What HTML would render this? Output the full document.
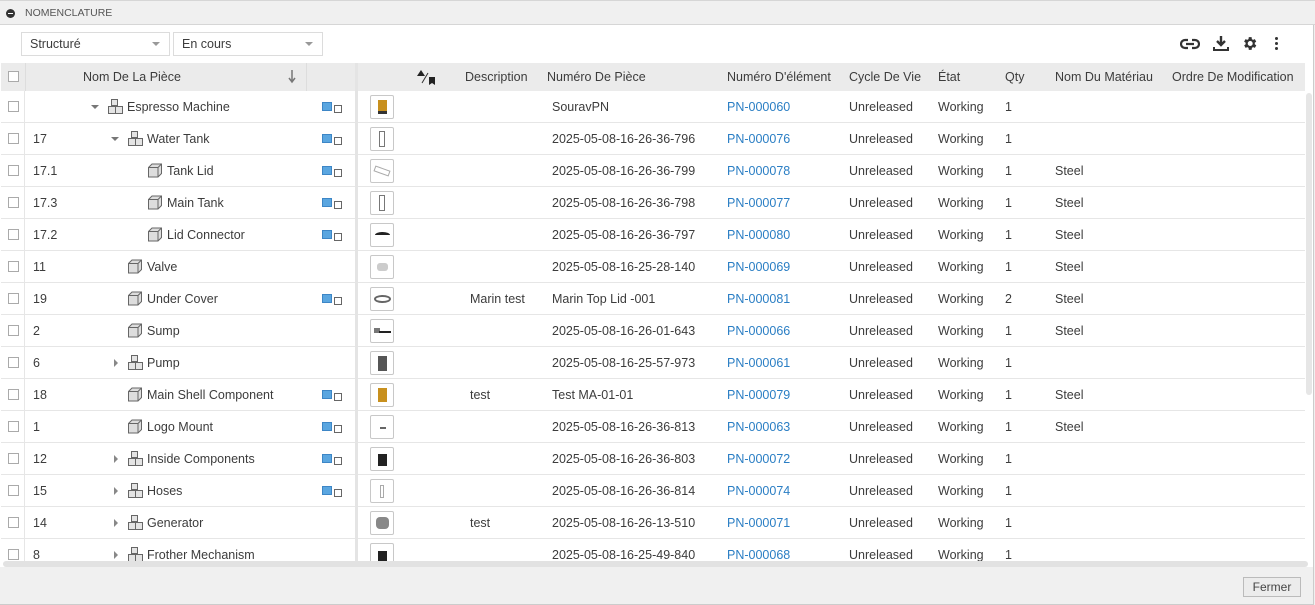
<!DOCTYPE html>
<html><head><meta charset="utf-8"><style>
*{box-sizing:border-box;margin:0;padding:0}
body{width:1315px;height:605px;overflow:hidden;background:#f0f0f0;font-family:"Liberation Sans",sans-serif;font-size:12px;color:#3c3c3c;position:relative}
.a{position:absolute}
.top{left:0;top:0;width:1315px;height:25px;background:#f0f0f0;border-bottom:1px solid #d6d6d6;border-top:1px solid #d6d6d6}
.main{left:0;top:25px;width:1314px;height:545px;background:#fff;border-right:1px solid #ccc}
.sel{top:32px;height:24px;border:1px solid #dcdcdc;background:#fff;line-height:22px;padding-left:8px;font-size:12.5px}
.sel:after{content:"";position:absolute;right:9px;top:9px;border-left:4px solid transparent;border-right:4px solid transparent;border-top:4px solid #999}
.hd{left:1px;top:63px;width:1304px;height:28px;background:#ebebeb}
.hd span{position:absolute;top:0;line-height:28px;font-size:12.5px}
.r{position:absolute;left:1px;width:1304px;height:32px;border-bottom:1px solid #e6e6e6;background:#fff}
.r span{position:absolute;top:0;line-height:33px;font-size:12.5px;white-space:nowrap}
.cb{position:absolute;left:7px;top:10px;width:11px;height:11px;border:1px solid #aaa;background:#fff}
.pn{color:#2a7ec4}
.th{position:absolute;left:369px;top:4px;width:24px;height:24px;border:1px solid #c8c8c8;border-radius:2px;background:#fff}
.ind{position:absolute;left:321px;top:11px;width:10px;height:9px;background:#5aa6e0;border:1px solid #3d86c6}
.ind:after{content:"";position:absolute;left:11px;top:2px;width:6px;height:6px;border:1px solid #666;background:#fff}
.ar{position:absolute;top:14px;border-left:4px solid transparent;border-right:4px solid transparent;border-top:4px solid #777}
.ar2{position:absolute;top:12px;border-top:4px solid transparent;border-bottom:4px solid transparent;border-left:4px solid #888}
svg.ic{position:absolute;top:7px}
</style></head><body>
<div class="a top"><div class="a" style="left:6px;top:8px;width:9px;height:9px;border-radius:50%;background:#333"><div class="a" style="left:2px;top:4px;width:5px;height:1px;background:#fff"></div></div><span class="a" style="left:25px;top:6px;font-size:10.5px;color:#555">NOMENCLATURE</span></div>
<div class="a main"></div>
<div class="a sel" style="left:21px;width:149px">Structuré</div>
<div class="a sel" style="left:173px;width:150px">En cours</div>
<svg class="a" style="left:1180px;top:37px" width="20" height="14" viewBox="0 0 20 14"><path d="M8 3H5a4 4 0 0 0 0 8h3M12 3h3a4 4 0 0 1 0 8h-3M6 7h8" fill="none" stroke="#333" stroke-width="2.2"/></svg>
<svg class="a" style="left:1213px;top:35px" width="16" height="17" viewBox="0 0 16 17"><path d="M8 1v9M4 6l4 4 4-4" fill="none" stroke="#333" stroke-width="2.4"/><path d="M1 12v3h14v-3" fill="none" stroke="#333" stroke-width="2"/></svg>
<svg class="a" style="left:1241px;top:35px" width="17" height="17" viewBox="0 0 24 24"><path fill="#333" d="M19.4 13a7.5 7.5 0 0 0 0-2l2.1-1.6-2-3.5-2.5 1a7.5 7.5 0 0 0-1.7-1L15 3h-4l-.4 2.9a7.5 7.5 0 0 0-1.7 1l-2.5-1-2 3.5L6.600 11a7.5 7.5 0 0 0 0 2l-2.1 1.6 2 3.5 2.5-1a7.5 7.5 0 0 0 1.7 1L11 21h4l.4-2.9a7.5 7.5 0 0 0 1.7-1l2.5 1 2-3.5zM13 15.5a3.5 3.5 0 1 1 0-7 3.5 3.5 0 0 1 0 7z"/></svg>
<div class="a" style="left:1275px;top:37px;width:3px;height:3px;background:#333;border-radius:50%;box-shadow:0 5px 0 #333,0 10px 0 #333"></div>
<div class="a hd">
<div class="cb" style="top:8px"></div>
<div class="a" style="left:24px;top:0;width:1px;height:28px;background:#ddd"></div>
<span style="left:82px">Nom De La Pièce</span>
<svg class="a" style="left:287px;top:7px" width="8" height="14"><path d="M4 0v11M1 8l3 4 3-4" fill="none" stroke="#777" stroke-width="1.5"/></svg>
<div class="a" style="left:305px;top:0;width:1px;height:28px;background:#ddd"></div>
<svg class="a" style="left:414px;top:6px" width="22" height="16"><path d="M2 7l4-6 4 6z" fill="#222"/><path d="M7 14l6-10" stroke="#333"/><path d="M14 8h6v8l-3-2-3 2z" fill="#222"/></svg>
<span style="left:464px">Description</span><span style="left:546px">Numéro De Pièce</span><span style="left:726px">Numéro D'élément</span><span style="left:848px">Cycle De Vie</span><span style="left:937px">État</span><span style="left:1004px">Qty</span><span style="left:1054px">Nom Du Matériau</span><span style="left:1171px">Ordre De Modification</span>
</div>
<div class="a" style="left:355px;top:63px;width:3px;height:507px;background:#e4e4e4"></div>
<div class="a" style="left:24px;top:91px;width:1px;height:479px;background:#e6e6e6;z-index:2"></div>

<div class="r" style="top:91px"><div class="cb"></div><div class="ar" style="left:90px"></div><svg class="ic" style="left:106px" width="18" height="17"><path d="M4.5 1.5h6v6h-6zM1.5 8.5h7v7h-7zM8.5 8.5h7v7h-7z" fill="#e4e4e4" stroke="#666"/></svg><span style="left:126px">Espresso Machine</span><div class="ind"></div><div class="th"><div class="a" style="left:7px;top:4px;width:9px;height:14px;background:#c8901e;border-bottom:3px solid #333"></div></div><span style="left:551px">SouravPN</span><span class="pn" style="left:726px">PN-000060</span><span style="left:848px">Unreleased</span><span style="left:937px">Working</span><span style="left:1004px">1</span></div>

<div class="r" style="top:123px"><div class="cb"></div><span style="left:32px">17</span><div class="ar" style="left:110px"></div><svg class="ic" style="left:126px" width="18" height="17"><path d="M4.5 1.5h6v6h-6zM1.5 8.5h7v7h-7zM8.5 8.5h7v7h-7z" fill="#e4e4e4" stroke="#666"/></svg><span style="left:146px">Water Tank</span><div class="ind"></div><div class="th"><div class="a" style="left:8px;top:3px;width:6px;height:16px;border:1px solid #777"></div></div><span style="left:551px">2025-05-08-16-26-36-796</span><span class="pn" style="left:726px">PN-000076</span><span style="left:848px">Unreleased</span><span style="left:937px">Working</span><span style="left:1004px">1</span></div>

<div class="r" style="top:155px"><div class="cb"></div><span style="left:32px">17.1</span><svg class="ic" style="left:146px" width="16" height="16"><path d="M1.5 5.5L5 2h9.5v9.5L11 15H1.5z" fill="#ddd" stroke="#666"/><path d="M1.5 5.5H11V15M11 5.5l3.5-3.5" fill="none" stroke="#666"/></svg><span style="left:166px">Tank Lid</span><div class="ind"></div><div class="th"><div class="a" style="left:3px;top:8px;width:16px;height:6px;border:1px solid #aaa;transform:rotate(20deg)"></div></div><span style="left:551px">2025-05-08-16-26-36-799</span><span class="pn" style="left:726px">PN-000078</span><span style="left:848px">Unreleased</span><span style="left:937px">Working</span><span style="left:1004px">1</span><span style="left:1054px">Steel</span></div>

<div class="r" style="top:187px"><div class="cb"></div><span style="left:32px">17.3</span><svg class="ic" style="left:146px" width="16" height="16"><path d="M1.5 5.5L5 2h9.5v9.5L11 15H1.5z" fill="#ddd" stroke="#666"/><path d="M1.5 5.5H11V15M11 5.5l3.5-3.5" fill="none" stroke="#666"/></svg><span style="left:166px">Main Tank</span><div class="ind"></div><div class="th"><div class="a" style="left:8px;top:3px;width:6px;height:16px;border:1px solid #777"></div></div><span style="left:551px">2025-05-08-16-26-36-798</span><span class="pn" style="left:726px">PN-000077</span><span style="left:848px">Unreleased</span><span style="left:937px">Working</span><span style="left:1004px">1</span><span style="left:1054px">Steel</span></div>

<div class="r" style="top:219px"><div class="cb"></div><span style="left:32px">17.2</span><svg class="ic" style="left:146px" width="16" height="16"><path d="M1.5 5.5L5 2h9.5v9.5L11 15H1.5z" fill="#ddd" stroke="#666"/><path d="M1.5 5.5H11V15M11 5.5l3.5-3.5" fill="none" stroke="#666"/></svg><span style="left:166px">Lid Connector</span><div class="ind"></div><div class="th"><div class="a" style="left:4px;top:8px;width:15px;height:6px;border-top:3px solid #222;border-radius:50%"></div></div><span style="left:551px">2025-05-08-16-26-36-797</span><span class="pn" style="left:726px">PN-000080</span><span style="left:848px">Unreleased</span><span style="left:937px">Working</span><span style="left:1004px">1</span><span style="left:1054px">Steel</span></div>

<div class="r" style="top:251px"><div class="cb"></div><span style="left:32px">11</span><svg class="ic" style="left:126px" width="16" height="16"><path d="M1.5 5.5L5 2h9.5v9.5L11 15H1.5z" fill="#ddd" stroke="#666"/><path d="M1.5 5.5H11V15M11 5.5l3.5-3.5" fill="none" stroke="#666"/></svg><span style="left:146px">Valve</span><div class="th"><div class="a" style="left:6px;top:7px;width:11px;height:8px;background:#ccc;border-radius:3px"></div></div><span style="left:551px">2025-05-08-16-25-28-140</span><span class="pn" style="left:726px">PN-000069</span><span style="left:848px">Unreleased</span><span style="left:937px">Working</span><span style="left:1004px">1</span><span style="left:1054px">Steel</span></div>

<div class="r" style="top:283px"><div class="cb"></div><span style="left:32px">19</span><svg class="ic" style="left:126px" width="16" height="16"><path d="M1.5 5.5L5 2h9.5v9.5L11 15H1.5z" fill="#ddd" stroke="#666"/><path d="M1.5 5.5H11V15M11 5.5l3.5-3.5" fill="none" stroke="#666"/></svg><span style="left:146px">Under Cover</span><div class="ind"></div><div class="th"><div class="a" style="left:3px;top:7px;width:17px;height:8px;border:2px solid #666;border-radius:50%"></div></div><span style="left:469px">Marin test</span><span style="left:551px">Marin Top Lid -001</span><span class="pn" style="left:726px">PN-000081</span><span style="left:848px">Unreleased</span><span style="left:937px">Working</span><span style="left:1004px">2</span><span style="left:1054px">Steel</span></div>

<div class="r" style="top:315px"><div class="cb"></div><span style="left:32px">2</span><svg class="ic" style="left:126px" width="16" height="16"><path d="M1.5 5.5L5 2h9.5v9.5L11 15H1.5z" fill="#ddd" stroke="#666"/><path d="M1.5 5.5H11V15M11 5.5l3.5-3.5" fill="none" stroke="#666"/></svg><span style="left:146px">Sump</span><div class="th"><div class="a" style="left:3px;top:8px;width:6px;height:5px;background:#777"></div><div class="a" style="left:8px;top:11px;width:12px;height:2px;background:#222"></div></div><span style="left:551px">2025-05-08-16-26-01-643</span><span class="pn" style="left:726px">PN-000066</span><span style="left:848px">Unreleased</span><span style="left:937px">Working</span><span style="left:1004px">1</span><span style="left:1054px">Steel</span></div>

<div class="r" style="top:347px"><div class="cb"></div><span style="left:32px">6</span><div class="ar2" style="left:113px"></div><svg class="ic" style="left:126px" width="18" height="17"><path d="M4.5 1.5h6v6h-6zM1.5 8.5h7v7h-7zM8.5 8.5h7v7h-7z" fill="#e4e4e4" stroke="#666"/></svg><span style="left:146px">Pump</span><div class="th"><div class="a" style="left:7px;top:4px;width:9px;height:15px;background:#555"></div></div><span style="left:551px">2025-05-08-16-25-57-973</span><span class="pn" style="left:726px">PN-000061</span><span style="left:848px">Unreleased</span><span style="left:937px">Working</span><span style="left:1004px">1</span></div>

<div class="r" style="top:379px"><div class="cb"></div><span style="left:32px">18</span><svg class="ic" style="left:126px" width="16" height="16"><path d="M1.5 5.5L5 2h9.5v9.5L11 15H1.5z" fill="#ddd" stroke="#666"/><path d="M1.5 5.5H11V15M11 5.5l3.5-3.5" fill="none" stroke="#666"/></svg><span style="left:146px">Main Shell Component</span><div class="ind"></div><div class="th"><div class="a" style="left:7px;top:4px;width:9px;height:14px;background:#c8901e"></div></div><span style="left:469px">test</span><span style="left:551px">Test MA-01-01</span><span class="pn" style="left:726px">PN-000079</span><span style="left:848px">Unreleased</span><span style="left:937px">Working</span><span style="left:1004px">1</span><span style="left:1054px">Steel</span></div>

<div class="r" style="top:411px"><div class="cb"></div><span style="left:32px">1</span><svg class="ic" style="left:126px" width="16" height="16"><path d="M1.5 5.5L5 2h9.5v9.5L11 15H1.5z" fill="#ddd" stroke="#666"/><path d="M1.5 5.5H11V15M11 5.5l3.5-3.5" fill="none" stroke="#666"/></svg><span style="left:146px">Logo Mount</span><div class="ind"></div><div class="th"><div class="a" style="left:9px;top:11px;width:6px;height:2px;background:#666"></div></div><span style="left:551px">2025-05-08-16-26-36-813</span><span class="pn" style="left:726px">PN-000063</span><span style="left:848px">Unreleased</span><span style="left:937px">Working</span><span style="left:1004px">1</span><span style="left:1054px">Steel</span></div>

<div class="r" style="top:443px"><div class="cb"></div><span style="left:32px">12</span><div class="ar2" style="left:113px"></div><svg class="ic" style="left:126px" width="18" height="17"><path d="M4.5 1.5h6v6h-6zM1.5 8.5h7v7h-7zM8.5 8.5h7v7h-7z" fill="#e4e4e4" stroke="#666"/></svg><span style="left:146px">Inside Components</span><div class="ind"></div><div class="th"><div class="a" style="left:7px;top:6px;width:9px;height:12px;background:#222"></div></div><span style="left:551px">2025-05-08-16-26-36-803</span><span class="pn" style="left:726px">PN-000072</span><span style="left:848px">Unreleased</span><span style="left:937px">Working</span><span style="left:1004px">1</span></div>

<div class="r" style="top:475px"><div class="cb"></div><span style="left:32px">15</span><div class="ar2" style="left:113px"></div><svg class="ic" style="left:126px" width="18" height="17"><path d="M4.5 1.5h6v6h-6zM1.5 8.5h7v7h-7zM8.5 8.5h7v7h-7z" fill="#e4e4e4" stroke="#666"/></svg><span style="left:146px">Hoses</span><div class="ind"></div><div class="th"><div class="a" style="left:9px;top:5px;width:4px;height:13px;border:1px solid #aaa"></div></div><span style="left:551px">2025-05-08-16-26-36-814</span><span class="pn" style="left:726px">PN-000074</span><span style="left:848px">Unreleased</span><span style="left:937px">Working</span><span style="left:1004px">1</span></div>

<div class="r" style="top:507px"><div class="cb"></div><span style="left:32px">14</span><div class="ar2" style="left:113px"></div><svg class="ic" style="left:126px" width="18" height="17"><path d="M4.5 1.5h6v6h-6zM1.5 8.5h7v7h-7zM8.5 8.5h7v7h-7z" fill="#e4e4e4" stroke="#666"/></svg><span style="left:146px">Generator</span><div class="th"><div class="a" style="left:5px;top:5px;width:13px;height:12px;background:#888;border-radius:4px"></div></div><span style="left:469px">test</span><span style="left:551px">2025-05-08-16-26-13-510</span><span class="pn" style="left:726px">PN-000071</span><span style="left:848px">Unreleased</span><span style="left:937px">Working</span><span style="left:1004px">1</span></div>

<div class="r" style="top:539px"><div class="cb"></div><span style="left:32px">8</span><div class="ar2" style="left:113px"></div><svg class="ic" style="left:126px" width="18" height="17"><path d="M4.5 1.5h6v6h-6zM1.5 8.5h7v7h-7zM8.5 8.5h7v7h-7z" fill="#e4e4e4" stroke="#666"/></svg><span style="left:146px">Frother Mechanism</span><div class="th"><div class="a" style="left:7px;top:7px;width:9px;height:10px;background:#222"></div></div><span style="left:551px">2025-05-08-16-25-49-840</span><span class="pn" style="left:726px">PN-000068</span><span style="left:848px">Unreleased</span><span style="left:937px">Working</span><span style="left:1004px">1</span></div>

<div class="a" style="left:355px;top:91px;width:3px;height:479px;background:#e4e4e4;z-index:3"></div>
<div class="a" style="left:0;top:567px;width:1314px;height:38px;background:#f0f0f0;z-index:4;border-bottom:1px solid #ccc;border-right:1px solid #ccc"></div>
<div class="a" style="left:3px;top:561px;width:1305px;height:6px;background:#e2e2e2;border-radius:3px;z-index:5"></div>
<div class="a" style="left:1306px;top:93px;width:6px;height:302px;background:#e6e6e6;border-radius:3px;z-index:5"></div>
<div class="a" style="left:1243px;top:577px;width:58px;height:20px;border:1px solid #bbb;background:#ececec;font-size:12px;line-height:18px;text-align:center;z-index:6;color:#444">Fermer</div>
</body></html>
